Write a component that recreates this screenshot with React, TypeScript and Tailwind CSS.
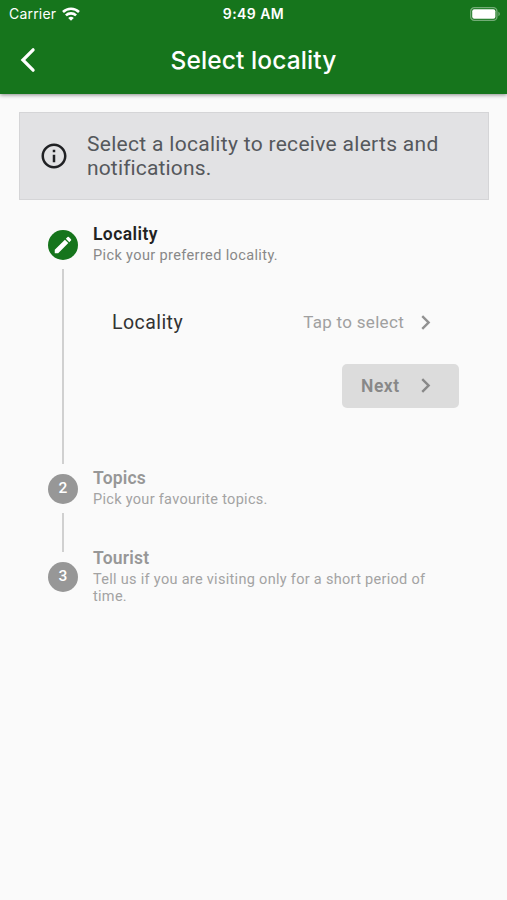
import type { ReactNode } from 'react';
import { MdChevronRight, MdEdit, MdInfoOutline } from 'react-icons/md';

type StepProps = {
  marker: ReactNode;
  title: string;
  subtitle: string;
  active?: boolean;
  className?: string;
};

function WifiIcon() {
  return (
    <svg width="18" height="14" viewBox="0 0 18 14" fill="none" stroke="white" strokeWidth="2.6">
      <path d="M1 5a11.6 11.6 0 0 1 16 0" />
      <path d="M3.9 8.4a7.4 7.4 0 0 1 10.2 0" />
      <path d="M9 13.8 6.2 11a4 4 0 0 1 5.6 0Z" fill="white" stroke="none" />
    </svg>
  );
}

function BatteryIcon() {
  return (
    <svg width="31" height="14" viewBox="0 0 31 14">
      <rect x="0.7" y="0.7" width="26.2" height="12.6" rx="3.6" fill="none" stroke="white" strokeOpacity="0.4" strokeWidth="1.3" />
      <rect x="2.2" y="2.2" width="23.2" height="9.6" rx="2" fill="white" />
      <path d="M28.4 4.8c1.9.7 1.9 3.7 0 4.4Z" fill="white" fillOpacity="0.4" />
    </svg>
  );
}

function BackIcon() {
  return (
    <svg width="16" height="26" viewBox="0 0 16 26" fill="none" stroke="white" strokeWidth="3.2" strokeLinecap="round">
      <path d="M13.1 2.8 2.9 13l10.2 10.2" />
    </svg>
  );
}

function StatusBar() {
  return (
    <div className="grid h-[27px] grid-cols-3 items-center pr-[6px] pl-[9px] text-[14px]">
      <div className="flex items-center gap-[6px]">
        <span className="tracking-[0.2px]">Carrier</span>
        <WifiIcon />
      </div>
      <span className="pr-[3px] text-center text-[14px] font-semibold tracking-[0.45px] whitespace-nowrap">9:49 AM</span>
      <div className="flex justify-end">
        <BatteryIcon />
      </div>
    </div>
  );
}

function Step({ marker, title, subtitle, active = false, className = '' }: StepProps) {
  return (
    <div className={`flex items-center gap-[15px] ${className}`}>
      <div className={`flex size-[30px] shrink-0 items-center justify-center rounded-full text-[15.5px] leading-none font-medium text-white ${active ? 'bg-[#16751c]' : 'bg-[#979797]'}`}>
        {marker}
      </div>
      <div>
        <h2 className={`-mt-[2px] mb-[2px] text-[17.5px] leading-[22px] font-semibold ${active ? 'tracking-[0.4px] text-[#222222]' : 'tracking-[0.2px] text-[#979797]'}`}>{title}</h2>
        <p className={`w-[345px] text-[14.5px] leading-[17px] ${active ? 'tracking-[0.38px] text-[#888888]' : 'tracking-[0.3px] text-[#a3a3a3]'}`}>{subtitle}</p>
      </div>
    </div>
  );
}

export default function App() {
  return (
    <div className="h-[900px] w-[507px] overflow-hidden bg-[#fafafa] font-['Roboto',sans-serif]">
      <header className="h-[94px] bg-[#16751c] font-['Inter',sans-serif] text-white shadow-[0_1px_4px_rgba(0,0,0,0.45)]">
        <StatusBar />
        <div className="grid h-[66px] grid-cols-[80px_1fr_80px] items-center">
          <button type="button" aria-label="Back" className="pl-[20px]">
            <BackIcon />
          </button>
          <h1 className="text-center text-[24.5px] font-medium tracking-[0.1px]">Select locality</h1>
        </div>
      </header>

      <main>
        <section className="mt-[18px] mr-[18px] ml-[19px] flex h-[88px] items-center border border-[#d5d5d7] bg-[#e2e2e4] pl-[19px]">
          <MdInfoOutline className="size-[30px] text-[#202124]" />
          <p className="ml-[18px] text-[21px] leading-[24.5px] tracking-[0.3px] text-[#55585c]">
            Select a locality to receive alerts and
            <br />
            <span className="tracking-[0.15px]">notifications.</span>
          </p>
        </section>

        <section className="pt-[24px] pl-[48px]">
          <Step active marker={<MdEdit className="size-[22px]" />} title="Locality" subtitle="Pick your preferred locality." className="h-[41px]" />

          <div className="mt-[4px] ml-[14px] flex h-[195px] border-l-2 border-[#d0d0d0]">
            <div className="w-[395px] pl-[48px]">
              <div className="mt-[39px] flex h-[30px] items-center">
                <span className="text-[19.5px] tracking-[0.45px] text-[#333333]">Locality</span>
                <span className="ml-auto text-[17px] tracking-[0.3px] text-[#a0a0a0]">Tap to select</span>
                <MdChevronRight className="-mt-px mr-[19px] ml-[7px] size-[29px] text-[#929292]" />
              </div>
              <button type="button" disabled className="mt-[26px] ml-auto flex h-[44px] w-[117px] items-center rounded-[5px] bg-[#dcdcdc] pl-[19px] text-[17.5px] font-semibold tracking-[0.5px] text-[#888888]">
                Next
                <MdChevronRight className="-mt-px mr-[19px] ml-auto size-[29px]" />
              </button>
            </div>
          </div>

          <Step marker="2" title="Topics" subtitle="Pick your favourite topics." className="mt-[4px] h-[41px]" />
          <div className="mt-[4px] ml-[14px] h-[39px] w-[2px] bg-[#d0d0d0]" />
          <Step marker="3" title="Tourist" subtitle="Tell us if you are visiting only for a short period of time." className="mt-[-4px] h-[58px]" />
        </section>
      </main>
    </div>
  );
}
